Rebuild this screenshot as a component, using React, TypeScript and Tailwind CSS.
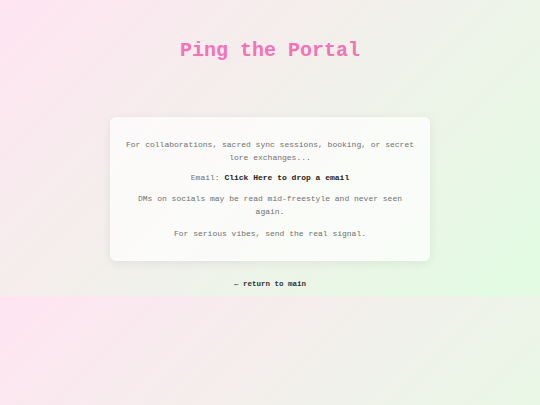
export default function App() {
  return (
    <div className="h-[405px] w-full bg-[linear-gradient(135deg,#ffe5f2,#e2fce2)] bg-[length:100%_296px] bg-repeat font-['Courier_New','Liberation_Mono',monospace]">
      <div className="flex flex-col items-center pt-[39px]">
        <h1 className="text-[20px] leading-[24px] font-bold text-[#f472b6]">Ping the Portal</h1>
        <div className="mt-[54px] w-[320px] rounded-md bg-white/70 px-[12px] pt-[21px] pb-[21px] text-center text-[8px] leading-[13px] text-[#707070] shadow-[0_2px_10px_rgba(0,0,0,0.07)]">
          <p>For collaborations, sacred sync sessions, booking, or secret lore exchanges...</p>
          <p className="mt-[7px]">
            Email: <a className="font-bold text-[#222]">Click Here to drop a email</a>
          </p>
          <p className="mt-[8px] px-[12px]">DMs on socials may be read mid-freestyle and never seen again.</p>
          <p className="mt-[9px]">For serious vibes, send the real signal.</p>
        </div>
        <a className="mt-[18px] text-[7.5px] leading-[10px] font-bold text-[#333]">← return to main</a>
      </div>
    </div>
  );
}
